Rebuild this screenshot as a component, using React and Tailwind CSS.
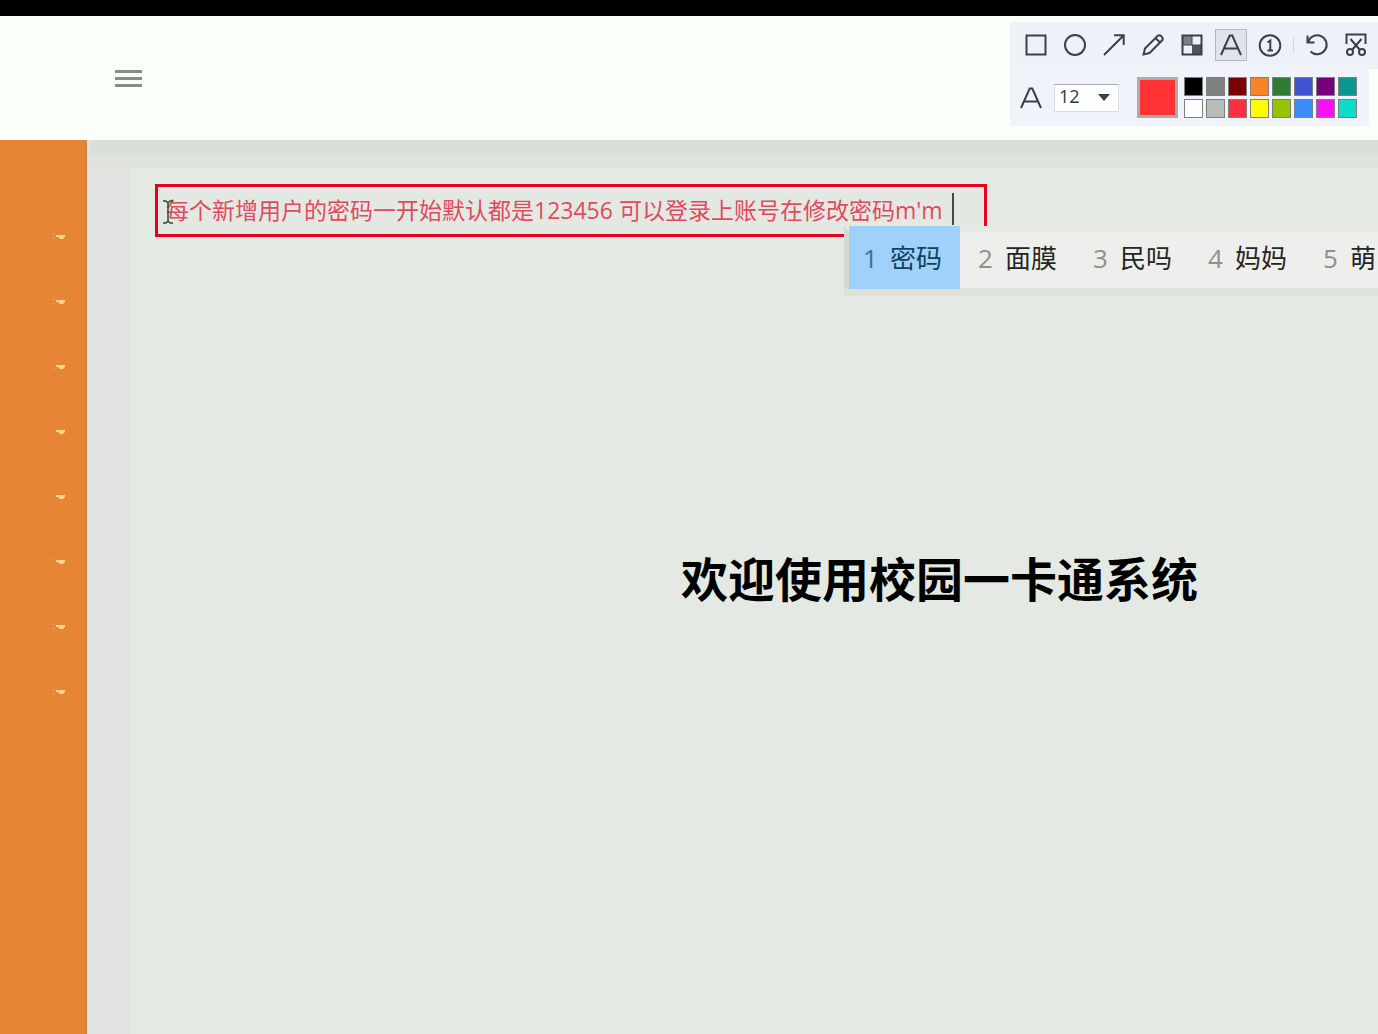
import React, { useState } from "react";

const MENU_ITEMS = [
  "首页",
  "用户管理",
  "卡片管理",
  "充值管理",
  "消费管理",
  "挂失管理",
  "公告管理",
  "系统设置",
];

const CANDIDATES = ["密码", "面膜", "民吗", "妈妈", "萌"];

const COLORS = [
  { name: "black", className: "bg-black" },
  { name: "gray", className: "bg-[#7f837f]" },
  { name: "dark red", className: "bg-[#7d0006]" },
  { name: "orange", className: "bg-[#f88425]" },
  { name: "green", className: "bg-[#2f7d35]" },
  { name: "blue", className: "bg-[#3f55d0]" },
  { name: "purple", className: "bg-[#780078]" },
  { name: "teal", className: "bg-[#0c9690]" },
  { name: "white", className: "bg-white" },
  { name: "silver", className: "bg-[#b9bdb9]" },
  { name: "red", className: "bg-[#fb2f3e]" },
  { name: "yellow", className: "bg-[#fffb00]" },
  { name: "lime", className: "bg-[#95c500]" },
  { name: "light blue", className: "bg-[#3b8cf8]" },
  { name: "magenta", className: "bg-[#f612f2]" },
  { name: "cyan", className: "bg-[#0cdccb]" },
];

const Icon = ({ children }) => (
  <svg
    viewBox="0 0 24 24"
    className="size-6"
    fill="none"
    stroke="#3c4046"
    strokeWidth="2"
    aria-hidden="true"
  >
    {children}
  </svg>
);

const LetterShape = () => (
  <Icon>
    <path d="M2 22 10.7 2.5h2.6L22 22M5.5 15.5h13" />
  </Icon>
);

const TOOLS = [
  {
    name: "Rectangle",
    icon: (
      <Icon>
        <rect x="2.5" y="2.5" width="19" height="19" />
      </Icon>
    ),
  },
  {
    name: "Ellipse",
    icon: (
      <Icon>
        <circle cx="12" cy="12" r="10" />
      </Icon>
    ),
  },
  {
    name: "Arrow",
    icon: (
      <Icon>
        <path d="M2 22 22 2M12 2.3h9.7V12" />
      </Icon>
    ),
  },
  {
    name: "Pencil",
    icon: (
      <Icon>
        <path d="M2.5 21.5 4 15.5 16.5 3q1.8-1.6 3.6.1l.8.8q1.7 1.8.1 3.6L8.5 20ZM14.500 5 19 9.500" />
      </Icon>
    ),
  },
  {
    name: "Mosaic",
    icon: (
      <Icon>
        <path d="M3 3h9v9H3Z" fill="#7b8087" stroke="none" />
        <path d="M12 12h9v9h-9Z" fill="#50555c" stroke="none" />
        <path d="M2.5 2.5h19v19h-19Z" />
        <path d="M12 3v9M3 12h18" strokeWidth="1" />
      </Icon>
    ),
  },
  { name: "Text", icon: <LetterShape /> },
  {
    name: "Number",
    icon: (
      <Icon>
        <circle cx="12" cy="12.5" r="10.3" />
        <path d="M9.5 9.5 12.3 7.5v10M9.5 17.5h5.5" />
      </Icon>
    ),
  },
];

const EDIT_TOOLS = [
  {
    name: "Undo",
    icon: (
      <Icon>
        <path d="M2.5 2.5v7h7M3 9.2A9.5 9.5 0 1 1 5.5 18.5" />
      </Icon>
    ),
  },
  {
    name: "Cut out",
    icon: (
      <Icon>
        <path d="M2.5 11V1.5h19V11M6.5 6 16 17M17.5 6 8 17" />
        <circle cx="6" cy="19" r="3" />
        <circle cx="18" cy="19" r="3" />
      </Icon>
    ),
  },
];

const ToolButton = ({ tool, active, onClick }) => (
  <button
    type="button"
    aria-label={tool.name}
    onClick={onClick}
    className={`flex size-8 items-center justify-center ${
      active ? "border border-[#b4b8c0] bg-[#dfe3ea]" : ""
    }`}
  >
    {tool.icon}
  </button>
);

const DrawToolbar = () => {
  const [tool, setTool] = useState("Text");
  const [size, setSize] = useState("12");
  const [color, setColor] = useState("bg-[#ff3236]");

  return (
    <div className="mt-[6px] flex flex-col items-start">
      <div className="flex items-center gap-[7px] bg-[#eef2f8] pt-[7px] pr-[6px] pb-2 pl-[10px]">
        {TOOLS.map((t) => (
          <ToolButton
            key={t.name}
            tool={t}
            active={tool === t.name}
            onClick={() => setTool(t.name)}
          />
        ))}
        <span className="h-4 w-px bg-[#d3d6dc]" />
        {EDIT_TOOLS.map((t) => (
          <ToolButton key={t.name} tool={t} />
        ))}
      </div>

      <div className="flex items-center bg-[#f0f3f9] py-2 pr-3 pl-[9px]">
        <LetterShape />
        <div className="relative ml-[11px]">
          <select
            aria-label="Font size"
            value={size}
            onChange={(e) => setSize(e.target.value)}
            className="block h-7 w-[65px] appearance-none border border-[#d9dce1] border-t-[#a9adb3] bg-[#fdfefe] pb-1 pl-1 font-['Open_Sans',sans-serif] text-lg leading-5 text-[#33373d]"
          >
            <option>10</option>
            <option>12</option>
            <option>14</option>
          </select>
          <svg
            viewBox="0 0 12 7"
            className="pointer-events-none absolute top-[10px] right-[9px] h-[7px] w-3"
            aria-hidden="true"
          >
            <path d="M0 0h12L6 7Z" fill="#3c4046" />
          </svg>
        </div>
        <span className={`ml-[18px] size-[41px] border-[3px] border-[#a9adab] ${color}`} />
        <div className="ml-[6px] grid grid-cols-8 gap-[3px]">
          {COLORS.map((c) => (
            <button
              key={c.name}
              type="button"
              aria-label={c.name}
              onClick={() => setColor(c.className)}
              className={`size-[19px] border border-[#7d817e] ${c.className}`}
            />
          ))}
        </div>
      </div>
    </div>
  );
};

const Sidebar = () => (
  <nav className="w-[87px] shrink-0 border-r border-[#cf8245] bg-[#e58535] pt-16">
    <ul>
      {MENU_ITEMS.map((item) => (
        <li key={item}>
          <button
            type="button"
            aria-label={item}
            className="flex h-[65px] w-full items-center justify-end pr-5"
          >
            <svg viewBox="0 0 14 8" className="h-2 w-[14px]" aria-hidden="true">
              <path d="M0 1h2v1H0ZM1 5h2v1H1Z" fill="#eda05c" />
              <path d="M4 2h9v2l-2 2H8L6 4H4Z" fill="#ffd48c" />
            </svg>
          </button>
        </li>
      ))}
    </ul>
  </nav>
);

const CandidateList = () => (
  <ol className="absolute top-[42px] left-[689px] flex h-[63px] w-[620px] border-t-[6px] border-b border-l-[5px] border-t-[#e6e9e4] border-b-[#dcdfda] border-l-[#d3d8d3] bg-[#eeefec] shadow-[0_7px_0_#dee2dc]">
    {CANDIDATES.map((word, i) => (
      <li key={word} className={i === 0 ? "-mt-[6px] h-[63px] bg-[#9fd2fb] pt-[6px]" : "pl-1"}>
        <button
          type="button"
          className={`flex h-[52px] w-[111px] items-center gap-3 pl-[14px] whitespace-nowrap text-[26px] ${
            i === 0 ? "text-[#12425f]" : "text-[#242624]"
          }`}
        >
          <span className={i === 0 ? "text-[#3f7191]" : "text-[#8d908d]"}>{i + 1}</span>
          {word}
        </button>
      </li>
    ))}
  </ol>
);

const NoteBox = () => {
  const [note, setNote] = useState(
    "每个新增用户的密码一开始默认都是123456 可以登录上账号在修改密码m'm"
  );

  return (
    <div className="relative w-[832px]">
      <input
        aria-label="Note"
        value={note}
        onChange={(e) => setNote(e.target.value)}
        className="block h-[53px] w-full border-[3px] border-[#e8001f] bg-[#e3e9e2] pb-[3px] pl-2 text-[23px] text-[#e04a5e] outline-none"
      />
      <span className="absolute top-[9px] left-[797px] h-8 w-[2px] bg-[#3d4b4b]" />
      {/* mouse pointer over the start of the text */}
      <svg
        viewBox="0 0 10 24"
        className="pointer-events-none absolute top-4 left-2 h-6 w-[10px]"
        fill="none"
        stroke="#2d4a35"
        strokeWidth="1.5"
        aria-hidden="true"
      >
        <path d="M0 1h3l2 2 2-2h3M5 3v18M0 23h3l2-2 2 2h3" />
      </svg>
      <CandidateList />
    </div>
  );
};

const App = () => {
  return (
    <div className="flex min-h-screen flex-col overflow-hidden bg-[#e4eae3] font-['Open_Sans','Noto_Sans_CJK_SC',sans-serif]">
      <div className="h-4 bg-black" />

      <header className="flex h-[124px] items-start justify-between bg-[#fafffa]">
        <button type="button" aria-label="Toggle menu" className="mt-[51px] ml-[115px]">
          <svg
            viewBox="0 0 27 22"
            className="h-[22px] w-[27px]"
            stroke="#868d87"
            strokeWidth="3"
            aria-hidden="true"
          >
            <path d="M0 4.5h27M0 11.5h27M0 18.5h27" />
          </svg>
        </button>
        <DrawToolbar />
      </header>

      <div className="flex flex-1">
        <Sidebar />
        <div className="flex min-w-0 flex-1 flex-col border-l-[3px] border-[#dde5e2] bg-[#e2e2e1]">
          <div className="h-[14px] bg-[#d9dfd9]" />
          <div className="h-[14px] bg-[#dfe3de]" />
          <main className="ml-10 flex-1 bg-[#e4eae3] pt-4 pl-[25px]">
            <NoteBox />
            <h1 className="mt-[307px] pl-[346px] text-center text-[47px] leading-[70px] font-bold whitespace-nowrap text-black">
              欢迎使用校园一卡通系统
            </h1>
          </main>
        </div>
      </div>
    </div>
  );
};

export default App;
